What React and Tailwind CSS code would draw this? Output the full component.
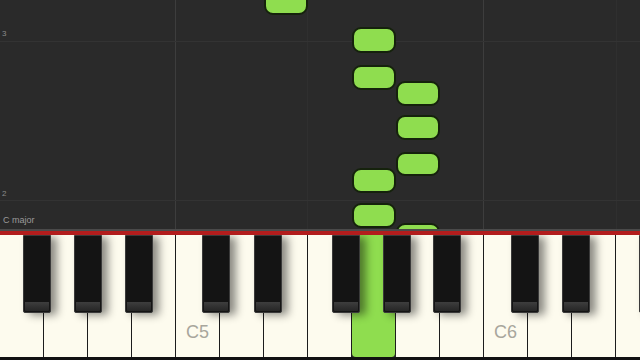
const WHITE = ['F', 'G', 'A', 'B', 'C5', 'D', 'E', 'F', 'G', 'A', 'B', 'C6', 'D', 'E', 'F'];
const BLACK = [23, 74, 125, 202, 254, 332, 383, 433, 511, 562, 639];

const NOTES = [
  { x: 264, y: -12, h: 27 },
  { x: 352, y: 27, h: 26 },
  { x: 352, y: 65, h: 25 },
  { x: 396, y: 81, h: 25 },
  { x: 396, y: 115, h: 25 },
  { x: 396, y: 152, h: 24 },
  { x: 352, y: 168, h: 25 },
  { x: 352, y: 203, h: 25 },
  { x: 396, y: 223, h: 26 },
];

function Note({ x, y, h }) {
  return (
    <div
      className="absolute w-[44px] rounded-[9px] border-2 border-[#15220c] bg-[#8fdd4f]"
      style={{ left: x, top: y, height: h }}
    />
  );
}

function WhiteKey({ label, active }) {
  const isC = label === 'C5' || label === 'C6';
  return (
    <div
      className={`flex h-full w-[44px] shrink-0 items-end justify-center border-r border-[#1c1c1c] pb-[16px] ${
        active ? 'bg-[#8fdd4f] rounded-b-[4px]' : 'bg-[#fdfbee]'
      }`}
    >
      {isC && <span className="text-[18px] leading-none text-[#a8a69c]">{label}</span>}
    </div>
  );
}

export default function App() {
  return (
    <div className="w-[640px] h-[360px] overflow-hidden bg-[#2a2a2a] flex flex-col" style={{ fontFamily: '"Liberation Sans", Arial, sans-serif' }}>
      <div className="relative h-[229px] shrink-0 overflow-hidden">
        {/* grid: bars and beats */}
        <div className="flex h-full">
          <div className="w-[176px] border-r border-[#3d3d3d]" />
          <div className="w-[132px] border-r border-[#2f2f2f]" />
          <div className="w-[176px] border-r border-[#3d3d3d]" />
          <div className="w-[133px] border-r border-[#2f2f2f]" />
        </div>
        <div className="absolute inset-0 flex flex-col">
          <div className="h-[42px] border-b border-[#333333] flex items-end pb-[3px] pl-[2px]">
            <span className="text-[8px] leading-none text-[#8a8a8a]">3</span>
          </div>
          <div className="h-[159px] border-b border-[#333333] flex items-end pb-[2px] pl-[2px]">
            <span className="text-[8px] leading-none text-[#8a8a8a]">2</span>
          </div>
          <div className="flex-1 flex items-end pb-[4px] pl-[3px]">
            <span className="text-[9px] leading-none text-[#9a9a9a]">C major</span>
          </div>
        </div>
        {NOTES.map((n, i) => (
          <Note key={i} {...n} />
        ))}
      </div>
      <div className="h-[2px] bg-[#4a4a4a]" />
      <div className="h-[4px] bg-[#b21d1d]" />
      <div className="relative flex-1 overflow-hidden">
        <div className="flex h-[122px]">
          {WHITE.map((l, i) => (
            <WhiteKey key={i} label={l} active={i === 8} />
          ))}
        </div>
        <div className="h-[3px] bg-[#111111]" />
        {BLACK.map((x, i) => (
          <div
            key={i}
            className="absolute top-0 w-[28px] h-[78px] rounded-b-[2px] bg-[#141414] border border-[#3a3a3a] shadow-[6px_2px_8px_rgba(0,0,0,0.45)] flex flex-col justify-end"
            style={{ left: x }}
          >
            <div className="h-[9px] mx-[1px] mb-[1px] bg-gradient-to-b from-[#3e3e3e] to-[#262626] rounded-b-[1px]" />
          </div>
        ))}
      </div>
    </div>
  );
}
